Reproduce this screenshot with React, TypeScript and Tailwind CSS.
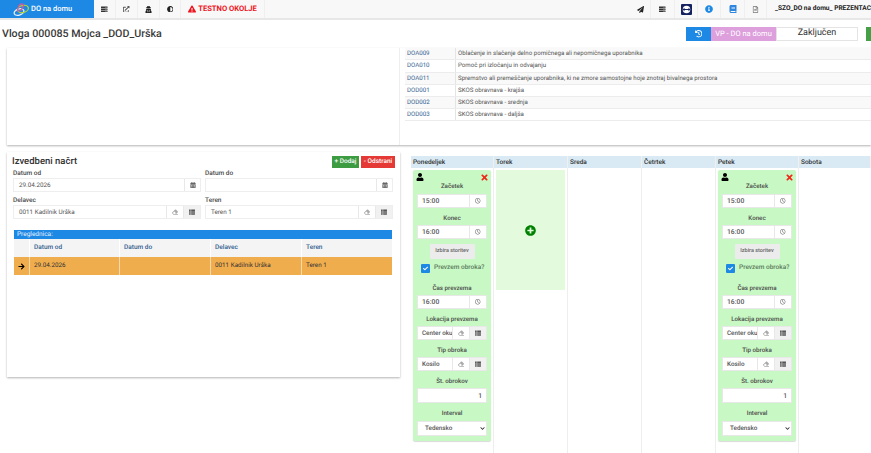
import {
  FaAdjust,
  FaArrowRight,
  FaBook,
  FaCalendarAlt,
  FaCheck,
  FaChevronDown,
  FaEraser,
  FaExclamationTriangle,
  FaExternalLinkAlt,
  FaHistory,
  FaInfoCircle,
  FaPaperPlane,
  FaPlusCircle,
  FaRegClock,
  FaRegFileAlt,
  FaServer,
  FaThList,
  FaTimes,
  FaUser,
  FaUserSecret,
} from "react-icons/fa";

const SERVICES = [
  { code: "DOA009", name: "Oblačenje in slačenje delno pomičnega ali nepomičnega uporabnika", h: "h-[12px]" },
  { code: "DOA010", name: "Pomoč pri izločanju in odvajanju", h: "h-[13px]" },
  { code: "DOA011", name: "Spremstvo ali premeščanje uporabnika, ki ne zmore samostojne hoje znotraj bivalnega prostora", h: "h-[12px]" },
  { code: "DOD001", name: "SKOS obravnava - krajša", h: "h-[12px]" },
  { code: "DOD002", name: "SKOS obravnava - srednja", h: "h-[12px]" },
  { code: "DOD003", name: "SKOS obravnava - daljša", h: "h-[12px]" },
];

function Logo() {
  return (
    <svg width="16" height="14" viewBox="0 0 32 28" fill="none" className="mr-[2px]">
      <ellipse cx="12" cy="20" rx="10" ry="6" stroke="#e8eef5" strokeWidth="2.5" transform="rotate(-20 12 20)" />
      <ellipse cx="20" cy="14" rx="11" ry="7" stroke="#b7d334" strokeWidth="2.5" transform="rotate(-15 20 14)" />
      <path d="M10 20C8 10 14 2 19 4c4 2 0 11-6 14" stroke="#d9569b" strokeWidth="2.5" />
    </svg>
  );
}

function TeamViewerIcon() {
  return (
    <svg width="11" height="11" viewBox="0 0 22 22">
      <rect width="22" height="22" rx="2" fill="#14235f" />
      <circle cx="11" cy="11" r="7.5" fill="#fff" />
      <path d="M3 11l4-3.5V10h8V7.5l4 3.5-4 3.5V12H7v2.5z" fill="#14235f" />
    </svg>
  );
}

function NavCell({ children, className = "" }: { children: React.ReactNode; className?: string }) {
  return (
    <div className={`flex h-full items-center justify-center border-r border-[#efefef] ${className}`}>{children}</div>
  );
}

function Addon({ children, shaded = false, w = "w-[17px]" }: { children: React.ReactNode; shaded?: boolean; w?: string }) {
  return (
    <div
      className={`flex h-full shrink-0 items-center justify-center border-l border-[#e8e8e8] ${w} ${
        shaded ? "bg-[#f1f1f1] text-[#555]" : "bg-white text-[#8a8a8a]"
      }`}
    >
      {children}
    </div>
  );
}

function FormField({ label, value, children }: { label: string; value?: string; children: React.ReactNode }) {
  return (
    <div className="min-w-0 flex-1">
      <div className="h-[9px] text-[6.5px] leading-[9px] font-medium text-[#4a4a4a]">{label}</div>
      <div className="flex h-[14px] border border-[#eeeeee] bg-white">
        <div className="flex-1 pl-[5px] text-[6.3px] leading-[13px] text-[#555]">{value}</div>
        {children}
      </div>
    </div>
  );
}

function CardLabel({ children }: { children: React.ReactNode }) {
  return <div className="text-center text-[6.2px] leading-[9px] font-medium text-[#4a4a4a]">{children}</div>;
}

function TimeInput({ value }: { value: string }) {
  return (
    <div className="mx-[4px] flex h-[14px] border border-[#e8e8e8] bg-white">
      <div className="flex-1 pl-[4px] text-[6.8px] leading-[13px] text-[#555]">{value}</div>
      <Addon>
        <FaRegClock className="text-[5.5px] text-[#666]" />
      </Addon>
    </div>
  );
}

function LookupInput({ value }: { value: string }) {
  return (
    <div className="mx-[4px] flex h-[14px] border border-[#e8e8e8] bg-white">
      <div className="min-w-0 flex-1 pl-[4px] text-[6.3px] leading-[13px] whitespace-nowrap text-[#555]">{value}</div>
      <Addon>
        <FaEraser className="text-[6px] text-[#aaa]" />
      </Addon>
      <Addon shaded>
        <FaThList className="text-[6px]" />
      </Addon>
    </div>
  );
}

function MealCard() {
  return (
    <div className="m-[2px] h-[271px] rounded-[2px] bg-[#c8f8c4] shadow-[0_1px_1px_rgba(0,0,0,0.15)]">
      <div className="flex h-[12px] items-center justify-between pt-[2px] pr-[2px] pl-[3px]">
        <FaUser className="text-[8px] text-black" />
        <FaTimes className="text-[9px] text-[#f02818]" />
      </div>
      <div className="mb-[3px]">
        <CardLabel>Začetek</CardLabel>
      </div>
      <TimeInput value="15:00" />
      <div className="mt-[6px] mb-[2px]">
        <CardLabel>Konec</CardLabel>
      </div>
      <TimeInput value="16:00" />
      <div className="mt-[5px] flex justify-center">
        <div className="flex h-[15px] w-[45px] items-center justify-center rounded-[1px] bg-[#ececec] text-[5.5px] text-[#666]">
          Izbira storitev
        </div>
      </div>
      <div className="mt-[4px] flex h-[10px] items-center pl-[8px]">
        <div className="flex h-[9px] w-[9px] items-center justify-center rounded-[1px] bg-[#1e88e5]">
          <FaCheck className="text-[5px] text-white" />
        </div>
        <span className="ml-[4px] text-[6.5px] whitespace-nowrap text-[#5b7a5e]">Prevzem obroka?</span>
      </div>
      <div className="mt-[11px] mb-[2px]">
        <CardLabel>Čas prevzema</CardLabel>
      </div>
      <TimeInput value="16:00" />
      <div className="mt-[6px] mb-[2px]">
        <CardLabel>Lokacija prevzema</CardLabel>
      </div>
      <LookupInput value="Center oku" />
      <div className="mt-[6px] mb-[2px]">
        <CardLabel>Tip obroka</CardLabel>
      </div>
      <LookupInput value="Kosilo" />
      <div className="mt-[6px] mb-[2px]">
        <CardLabel>Št. obrokov</CardLabel>
      </div>
      <div className="mx-[4px] h-[15px] border border-[#e8e8e8] bg-white pr-[4px] text-right text-[6.8px] leading-[14px] text-[#555]">
        1
      </div>
      <div className="mt-[6px] mb-[3px]">
        <CardLabel>Interval</CardLabel>
      </div>
      <div className="mx-[4px] flex h-[15px] items-center justify-between border border-[#e8e8e8] bg-white pr-[1px] pl-[7px] text-[6.3px] text-[#555]">
        <span>Tedensko</span>
        <FaChevronDown className="text-[5px] text-[#222]" />
      </div>
    </div>
  );
}

export default function App() {
  return (
    <div className="h-[453px] w-[871px] overflow-hidden bg-white font-['Roboto',sans-serif] [text-rendering:geometricPrecision]">
      {/* Navbar */}
      <div className="flex h-[20px] items-start border-b-2 border-[#e7e7e7] bg-[#f8f8f8]">
        <div className="flex h-[18px] w-[94px] shrink-0 items-center bg-[#1e88e5] pl-[13px] text-[7.5px] font-medium text-white">
          <Logo />
          DO na domu
        </div>
        <div className="flex h-[18px] items-center">
          <NavCell className="w-[22px]">
            <FaServer className="text-[6.5px] text-[#333]" />
          </NavCell>
          <NavCell className="w-[22px]">
            <FaExternalLinkAlt className="text-[6.5px] text-[#555]" />
          </NavCell>
          <NavCell className="w-[22px]">
            <FaUserSecret className="text-[7px] text-[#222]" />
          </NavCell>
          <NavCell className="w-[21px]">
            <FaAdjust className="text-[6.5px] text-[#222]" />
          </NavCell>
          <NavCell className="w-[84px] text-[7.6px] font-bold whitespace-nowrap text-[#f0141e]">
            <FaExclamationTriangle className="mr-[2px] text-[8px]" />
            TESTNO OKOLJE
          </NavCell>
        </div>
        <div className="ml-auto flex h-[18px] items-center">
          <NavCell className="w-[21px]">
            <FaPaperPlane className="text-[7px] text-[#222]" />
          </NavCell>
          <NavCell className="w-[24px]">
            <FaServer className="text-[6.5px] text-[#333]" />
          </NavCell>
          <NavCell className="w-[23px]">
            <TeamViewerIcon />
          </NavCell>
          <NavCell className="w-[23px]">
            <FaInfoCircle className="text-[8px] text-[#1e88e5]" />
          </NavCell>
          <NavCell className="w-[24px]">
            <FaBook className="text-[8px] text-[#2e86de]" />
          </NavCell>
          <NavCell className="w-[22px]">
            <FaRegFileAlt className="text-[7px] text-[#777]" />
          </NavCell>
          <div className="w-[104px] pl-[8px] text-[6.6px] font-bold whitespace-nowrap text-[#222]">
            _SZO_DO na domu_ PREZENTACIJA
          </div>
        </div>
      </div>

      {/* Title row */}
      <div className="flex h-[28px] items-center justify-between pl-[2px]">
        <h1 className="pt-[1px] text-[10.7px] font-medium whitespace-nowrap text-[#3a3a3a]">
          Vloga 000085 Mojca _DOD_Urška
        </h1>
        <div className="flex h-[14px] items-center">
          <div className="flex h-full w-[25px] items-center justify-center bg-[#1e88e5]">
            <FaHistory className="text-[7.5px] text-white" />
          </div>
          <div className="flex h-full w-[65px] items-center justify-center bg-[#dda0dd] text-[7.5px] whitespace-nowrap text-white">
            VP - DO na domu
          </div>
          <div className="flex h-full w-[82px] items-center justify-center border border-[#e4e4e4] bg-white text-[9px] text-[#333]">
            Zaključen
          </div>
          <div className="ml-[8px] h-full w-[5px] bg-[#43a047]" />
        </div>
      </div>

      {/* Top panel */}
      <div className="ml-[7px] flex h-[97px] bg-white shadow-[0_1px_2px_rgba(0,0,0,0.3)]">
        <div className="w-[393px] shrink-0 border-r border-[#eeeeee]" />
        <div className="ml-[5px] flex-1">
          {SERVICES.map((row, i) => (
            <div
              key={row.code}
              className={`flex items-center border-b border-[#ececec] text-[6.15px] ${row.h} ${
                i % 2 === 0 ? "bg-[#f9f9f9]" : "bg-white"
              }`}
            >
              <div className="h-full w-[51px] shrink-0 border-r border-[#e4e4e4] pl-[2px] leading-[11px] text-[#33608f]">
                {row.code}
              </div>
              <div className="pl-[2px] whitespace-nowrap text-[#555]">{row.name}</div>
            </div>
          ))}
        </div>
      </div>

      {/* Bottom row */}
      <div className="mt-[7px] flex items-start">
        <div className="ml-[7px] h-[225px] w-[393px] shrink-0 bg-white pt-[3px] pl-[5px] shadow-[0_1px_2px_rgba(0,0,0,0.3)]">
          <div className="flex h-[13px] items-center justify-between pr-[5px]">
            <h2 className="pt-[2px] text-[9.5px] font-medium text-[#333]">Izvedbeni načrt</h2>
            <div className="flex gap-[2px] text-[6.5px] font-medium text-white">
              <div className="flex h-[12px] w-[27px] items-center justify-center bg-[#3d9c42]">+ Dodaj</div>
              <div className="flex h-[12px] w-[34px] items-center justify-center bg-[#e53935]">- Odstrani</div>
            </div>
          </div>
          <div className="mt-[1px] flex gap-[4px] pr-[7px] pl-[1px]">
            <FormField label="Datum od" value="29.04.2026">
              <Addon w="w-[16px]">
                <FaCalendarAlt className="text-[6px] text-[#666]" />
              </Addon>
            </FormField>
            <FormField label="Datum do">
              <Addon w="w-[16px]">
                <FaCalendarAlt className="text-[6px] text-[#666]" />
              </Addon>
            </FormField>
          </div>
          <div className="mt-[4px] flex gap-[4px] pr-[7px] pl-[1px]">
            <FormField label="Delavec" value="0011 Kadilnik Urška">
              <Addon>
                <FaEraser className="text-[6px] text-[#aaa]" />
              </Addon>
              <Addon shaded>
                <FaThList className="text-[6px]" />
              </Addon>
            </FormField>
            <FormField label="Teren" value="Teren 1">
              <Addon>
                <FaEraser className="text-[6px] text-[#aaa]" />
              </Addon>
              <Addon shaded>
                <FaThList className="text-[6px]" />
              </Addon>
            </FormField>
          </div>
          <div className="mt-[11px] ml-[2px] w-[378px]">
            <div className="h-[9px] bg-[#1e88e5] pl-[3px] text-[6.5px] leading-[9px] text-[#e6f2fc]">Preglednica:</div>
            <div className="grid h-[18px] grid-cols-[16px_90px_91px_91px_90px] bg-[#f4f4f4] text-[6.5px] leading-[17px] font-medium text-[#33608f]">
              <div className="border-r border-white" />
              <div className="border-r border-white pl-[4px]">Datum od</div>
              <div className="border-r border-white pl-[4px]">Datum do</div>
              <div className="border-r border-white pl-[4px]">Delavec</div>
              <div className="pl-[4px]">Teren</div>
            </div>
            <div className="grid h-[18px] grid-cols-[16px_90px_91px_91px_90px] bg-[#f0ad4e] text-[6.3px] leading-[17px] text-[#333]">
              <div className="flex items-center justify-center border-r border-[#f7d9ab]">
                <FaArrowRight className="text-[7px] text-black" />
              </div>
              <div className="border-r border-[#f7d9ab] pl-[4px]">29.04.2026</div>
              <div className="border-r border-[#f7d9ab] pl-[4px]" />
              <div className="border-r border-[#f7d9ab] pl-[4px]">0011 Kadilnik Urška</div>
              <div className="pl-[4px]">Teren 1</div>
            </div>
          </div>
        </div>

        {/* Week grid */}
        <div className="mt-[4px] ml-[11px] grid grid-cols-[83px_74px_74px_74px_83px_72px] text-[6.5px] font-medium text-[#333]">
          {["Ponedeljek", "Torek", "Sreda", "Četrtek", "Petek", "Sobota"].map((day) => (
            <div key={day} className="h-[12px] border-r border-[#f0f0f0] bg-[#d9eaf5] pl-[2px] leading-[12px]">
              {day}
            </div>
          ))}
          <div className="h-[285px] border-r border-[#eeeeee]">
            <MealCard />
          </div>
          <div className="h-[285px] border-r border-[#eeeeee] p-[2px]">
            <div className="flex h-[120px] items-center justify-center bg-[#e3fbdc]">
              <FaPlusCircle className="text-[11px] text-[#008000]" />
            </div>
          </div>
          <div className="h-[285px] border-r border-[#eeeeee]" />
          <div className="h-[285px] border-r border-[#eeeeee]" />
          <div className="h-[285px] border-r border-[#eeeeee]">
            <MealCard />
          </div>
          <div className="h-[285px]" />
        </div>
      </div>
    </div>
  );
}
